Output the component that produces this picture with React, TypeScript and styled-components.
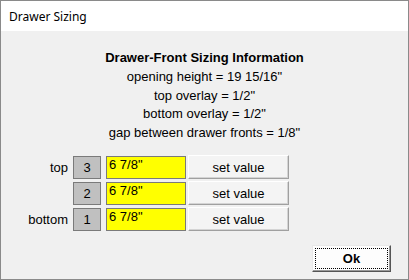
import React, { useState } from 'react'
import styled, { createGlobalStyle } from 'styled-components'

const GlobalStyle = createGlobalStyle`
    html, body {
        margin: 0;
        padding: 0;
        background: #f0f0f0;
    }
    * {
        box-sizing: border-box;
    }
`

const StyledWindow = styled.div`
    width: 409px;
    height: 280px;
    display: flex;
    flex-direction: column;
    border: 1px solid #8a8a8a;
    background-color: #f0f0f0;
    font-family: "Liberation Sans", Arial, sans-serif;
    font-size: 13px;
    color: #000;
`

const TitleBar = styled.div`
    height: 30px;
    display: flex;
    align-items: center;
    padding-left: 8px;
    background-color: #fff;
    font-family: "Noto Sans", "Open Sans", sans-serif;
    font-size: 12px;
`

const Body = styled.div`
    flex: 1;
    display: flex;
    flex-direction: column;
`

const Info = styled.div`
    padding-top: 18px;
    text-align: center;
    line-height: 18.75px;
`

const Heading = styled.div`
    font-weight: bold;
`

const Rows = styled.div`
    margin-top: 13px;
    display: flex;
    flex-direction: column;
    gap: 3px;
`

const Row = styled.div`
    display: flex;
    align-items: center;
    height: 23px;
`

const RowLabel = styled.div`
    width: 67px;
    text-align: right;
`

const NumberBox = styled.div`
    width: 28px;
    height: 23px;
    margin-left: 5px;
    display: flex;
    align-items: center;
    justify-content: center;
    background-color: #c0c0c0;
    border: 1px solid #7a7a7a;
`

const ValueField = styled.input`
    width: 80px;
    height: 23px;
    margin-left: 5px;
    padding: 0 2px 6px;
    background-color: #ffff00;
    border: 1px solid #7a7a7a;
    font-family: inherit;
    font-size: 13px;
    color: #000;
    outline: none;
`

const SetButton = styled.button`
    width: 101px;
    height: 24px;
    margin-left: 2px;
    padding: 0;
    background-color: #f4f4f4;
    border: 1px solid;
    border-color: #fff #a0a0a0 #a0a0a0 #fff;
    box-shadow: inset -1px -1px 0 #d4d4d4, 0 0 0 0 transparent;
    font-family: inherit;
    font-size: 13px;
    color: #000;
`

const Footer = styled.div`
    margin-top: 14px;
    display: flex;
    justify-content: flex-end;
    padding-right: 17px;
`

const OkButton = styled.button`
    width: 79px;
    height: 27px;
    padding: 2px;
    background-color: #fdfdfd;
    border: 1px solid;
    border-color: #e8e8e8 #555 #555 #e8e8e8;
    box-shadow: inset -1px -1px 0 #9a9a9a;
    font-family: inherit;
    font-size: 13px;
    font-weight: bold;
    color: #000;
`

const FocusRing = styled.span`
    display: flex;
    align-items: center;
    justify-content: center;
    width: 100%;
    height: 100%;
    border: 1px dotted #000;
`

type Drawer = { label: string, num: number }

const drawers: Drawer[] = [
    { label: 'top', num: 3 },
    { label: '', num: 2 },
    { label: 'bottom', num: 1 },
]

const App = (): JSX.Element => {
    const [values, setValues] = useState<string[]>(['6 7/8"', '6 7/8"', '6 7/8"'])

    const handleChange = (i: number, e: any): void => {
        const next = [...values]
        next[i] = e.target.value
        setValues(next)
    }

    return (
        <>
            <GlobalStyle />
            <StyledWindow>
                <TitleBar>Drawer Sizing</TitleBar>
                <Body>
                    <Info>
                        <Heading>Drawer-Front Sizing Information</Heading>
                        <div>opening height = 19 15/16"</div>
                        <div>top overlay = 1/2"</div>
                        <div>bottom overlay = 1/2"</div>
                        <div>gap between drawer fronts = 1/8"</div>
                    </Info>
                    <Rows>
                        {drawers.map((d, i) => (
                            <Row key={d.num}>
                                <RowLabel>{d.label}</RowLabel>
                                <NumberBox>{d.num}</NumberBox>
                                <ValueField
                                    value={values[i]}
                                    onChange={(e) => handleChange(i, e)} />
                                <SetButton>set value</SetButton>
                            </Row>
                        ))}
                    </Rows>
                    <Footer>
                        <OkButton>
                            <FocusRing>Ok</FocusRing>
                        </OkButton>
                    </Footer>
                </Body>
            </StyledWindow>
        </>
    )
}

export default App
